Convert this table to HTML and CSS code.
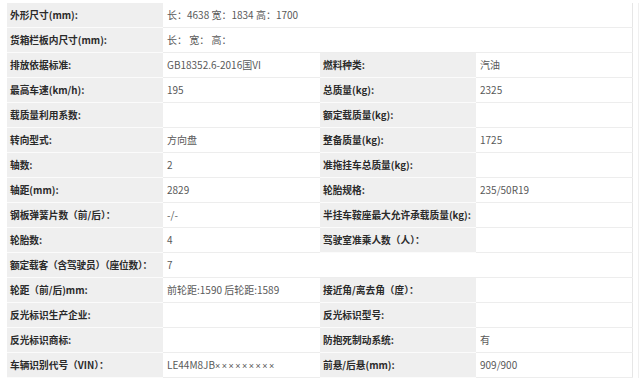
FILE: index.html
```html
<!DOCTYPE html>
<html lang="zh-CN">
<head>
<meta charset="utf-8">
<title>车辆参数</title>
<link rel="stylesheet" href="styles.css">
</head>
<body>
<div class="wrap">
<table class="spec">
<colgroup><col class="c1"><col class="c2"><col class="c3"><col class="c4"></colgroup>
<tbody>
<tr><td class="lbl">外形尺寸(mm):</td><td class="val" colspan="3">长：4638 宽：1834 高：1700</td></tr>
<tr><td class="lbl">货箱栏板内尺寸(mm):</td><td class="val" colspan="3">长：&nbsp;宽：&nbsp;高：</td></tr>
<tr><td class="lbl">排放依据标准:</td><td class="val">GB18352.6-2016国VI</td><td class="lbl">燃料种类:</td><td class="val">汽油</td></tr>
<tr><td class="lbl">最高车速(km/h):</td><td class="val">195</td><td class="lbl">总质量(kg):</td><td class="val">2325</td></tr>
<tr><td class="lbl">载质量利用系数:</td><td class="val"></td><td class="lbl">额定载质量(kg):</td><td class="val"></td></tr>
<tr><td class="lbl">转向型式:</td><td class="val">方向盘</td><td class="lbl">整备质量(kg):</td><td class="val">1725</td></tr>
<tr><td class="lbl">轴数:</td><td class="val">2</td><td class="lbl">准拖挂车总质量(kg):</td><td class="val"></td></tr>
<tr><td class="lbl">轴距(mm):</td><td class="val">2829</td><td class="lbl">轮胎规格:</td><td class="val">235/50R19</td></tr>
<tr><td class="lbl">钢板弹簧片数（前/后）：</td><td class="val">-/-</td><td class="lbl">半挂车鞍座最大允许承载质量(kg):</td><td class="val"></td></tr>
<tr><td class="lbl">轮胎数:</td><td class="val">4</td><td class="lbl">驾驶室准乘人数（人）：</td><td class="val"></td></tr>
<tr><td class="lbl tight">额定载客（含驾驶员）（座位数）：</td><td class="val" colspan="3">7</td></tr>
<tr><td class="lbl">轮距（前/后)mm:</td><td class="val">前轮距:1590 后轮距:1589</td><td class="lbl">接近角/离去角（度）：</td><td class="val"></td></tr>
<tr><td class="lbl">反光标识生产企业:</td><td class="val"></td><td class="lbl">反光标识型号:</td><td class="val"></td></tr>
<tr><td class="lbl">反光标识商标:</td><td class="val"></td><td class="lbl">防抱死制动系统:</td><td class="val">有</td></tr>
<tr><td class="lbl">车辆识别代号（VIN）：</td><td class="val">LE44M8JB<span class="mask">×××××××××</span></td><td class="lbl">前悬/后悬(mm):</td><td class="val">909/900</td></tr>
</tbody>
</table>
<div class="edge"></div>
</div>
</body>
</html>
```

FILE: styles.css
```css
html, body {
  margin: 0;
  padding: 0;
  background: #ffffff;
}

body {
  font-family: "Noto Sans CJK SC", "Noto Sans", sans-serif;
  font-size: 10px;
  color: #555;
}

.wrap {
  display: flex;
  padding: 3px 0 0 7px;
}

.spec {
  width: 625px;
  table-layout: fixed;
  border-collapse: collapse;
  border-right: 1px solid #e6e6e6;
}

.c1 { width: 156px; }
.c2 { width: 157px; }
.c3 { width: 156px; }
.c4 { width: 156px; }

.spec td {
  height: 24px;
  padding: 0 0 0 3px;
  border-bottom: 1px solid #ededed;
  white-space: nowrap;
  overflow: hidden;
  vertical-align: middle;
  line-height: 14px;
}

.spec td.lbl {
  background: #efefef;
  color: #2a2a2a;
  font-weight: bold;
  font-size: 9.7px;
  border-bottom-color: #fbfbfb;
}

.spec td.tight {
  letter-spacing: -0.2px;
}

.spec td.val {
  background: #ffffff;
  color: #595959;
  padding-left: 4px;
}

.mask {
  font-family: "Liberation Sans", sans-serif;
  font-size: 9px;
  letter-spacing: 1.5px;
}

.edge {
  width: 1px;
  margin-left: 5px;
  background: #f0f0f0;
}
```
